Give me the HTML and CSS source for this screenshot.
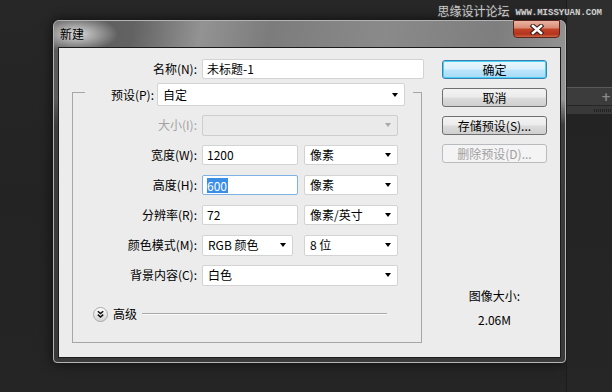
FILE: index.html
```html
<!DOCTYPE html>
<html lang="zh-CN">
<head>
    <meta charset="utf-8">
    <meta name="viewport" content="width=device-width,initial-scale=1.0">
    <link rel="stylesheet" href="styles.css">
</head>
<body>
<div class="screen">
    <div class="desk">
        <div class="dialog">
            <div class="titlebar">
                <span class="title">新建</span>
                <div class="close">
                    <svg width="14" height="11" viewBox="0 0 14 11">
                        <path d="M3 2 L11 9 M11 2 L3 9" stroke="#3a1a14" stroke-width="4.6" stroke-linecap="square"/>
                        <path d="M3 2 L11 9 M11 2 L3 9" stroke="#fff" stroke-width="2.6" stroke-linecap="square"/>
                    </svg>
                </div>
            </div>
            <div class="client">
                <div class="form">
                    <div class="name-row">
                        <label>名称(N):</label>
                        <div class="field name-field">未标题-1</div>
                    </div>
                    <fieldset class="group">
                        <legend>
                            <div class="preset">
                                <label>预设(P):</label>
                                <div class="field select preset-select">自定<i class="caret"></i></div>
                            </div>
                        </legend>
                        <div class="rows">
                            <div class="row disabled">
                                <label>大小(I):</label>
                                <div class="field select full"><i class="caret"></i></div>
                            </div>
                            <div class="row">
                                <label>宽度(W):</label>
                                <div class="field num">1200</div>
                                <div class="field select unit">像素<i class="caret"></i></div>
                            </div>
                            <div class="row">
                                <label>高度(H):</label>
                                <div class="field num focus"><span class="hl">600</span></div>
                                <div class="field select unit">像素<i class="caret"></i></div>
                            </div>
                            <div class="row">
                                <label>分辨率(R):</label>
                                <div class="field num">72</div>
                                <div class="field select unit">像素/英寸<i class="caret"></i></div>
                            </div>
                            <div class="row">
                                <label>颜色模式(M):</label>
                                <div class="field select mode">RGB 颜色<i class="caret"></i></div>
                                <div class="field select unit bits">8 位<i class="caret"></i></div>
                            </div>
                            <div class="row">
                                <label>背景内容(C):</label>
                                <div class="field select full">白色<i class="caret"></i></div>
                            </div>
                        </div>
                        <div class="advanced">
                            <svg class="adv-icon" width="15" height="15" viewBox="0 0 15 15">
                                <defs>
                                    <linearGradient id="ball" x1="0" y1="0" x2="0" y2="1">
                                        <stop offset="0" stop-color="#ffffff"/>
                                        <stop offset="1" stop-color="#d4d4d4"/>
                                    </linearGradient>
                                </defs>
                                <circle cx="7.5" cy="7.5" r="7" fill="url(#ball)" stroke="#a9a9a9"/>
                                <path d="M4.8 4.2 L7.5 6.6 L10.2 4.2 M4.8 7.6 L7.5 10 L10.2 7.6" fill="none" stroke="#111" stroke-width="1.5"/>
                            </svg>
                            <span>高级</span>
                            <div class="adv-line"></div>
                        </div>
                    </fieldset>
                </div>
                <div class="actions">
                    <div class="btn primary">确定</div>
                    <div class="btn">取消</div>
                    <div class="btn">存储预设(S)...</div>
                    <div class="btn off">删除预设(D)...</div>
                    <div class="size-label">图像大小:</div>
                    <div class="size-value">2.06M</div>
                </div>
            </div>
        </div>
    </div>
    <div class="panels">
        <div class="panel-top"></div>
        <div class="panel-tab"><span class="plus">+</span></div>
        <div class="panel-grip"><i></i></div>
        <div class="panel-body"></div>
    </div>
    <div class="watermark">思缘设计论坛<span>WWW.MISSYUAN.COM</span></div>
</div>
</body>
</html>
```

FILE: styles.css
```css
* {box-sizing: border-box;}
body {margin: 0; background: #242424; font: 12px/16px "Noto Sans CJK SC", "Microsoft YaHei", sans-serif; color: #000;}

.screen {position: relative; display: flex; width: 612px; height: 392px; overflow: hidden; background: linear-gradient(180deg, #272727 0%, #232323 50%, #252525 100%);}
.desk {width: 566px; flex: none; padding: 20px 0 0 53px;}

/* window frame */
.dialog {display: flex; flex-direction: column; width: 513px; height: 343px; padding: 0 4px 4px; border: 1px solid #b4b4b4; border-radius: 6px 6px 4px 4px;
    background:
        radial-gradient(ellipse 42px 18px at 22px 13px, rgba(235,235,235,.9), rgba(235,235,235,0)),
        linear-gradient(180deg, rgba(60,60,60,0) 0, rgba(60,60,60,0) 78px, #3d3d3d 104px, #3a3a3a 100%),
        linear-gradient(100deg, #5a5a5a 0%, #626262 14%, #939393 26%, #7c7c7c 38%, #8a8a8a 58%, #7e7e7e 78%, #a2a2a2 100%);
    box-shadow: 0 0 12px rgba(0,0,0,.7);}
.titlebar {display: flex; justify-content: space-between; align-items: flex-start; height: 26px; flex: none;}
.title {margin: 6px 0 0 2px; line-height: 14px; color: #000;}
.close {display: flex; align-items: center; justify-content: center; width: 47px; height: 18px; margin: -1px 1px 0 0; border: 1px solid #5e261b; border-radius: 0 0 4px 4px;
    background: linear-gradient(180deg, #eab3a3 0%, #d98d77 42%, #c2422a 52%, #b3331d 82%, #cf6547 100%);}

/* client area */
.client {display: flex; flex: 1; padding: 10px 0 0 13px; background: #ececec; border: 1px solid #1c1c1c;}
.form {width: 352px; flex: none;}
.name-row {display: flex; align-items: center; height: 21px;}
.name-row label {width: 130px; padding-right: 5px; text-align: right;}

.field {display: flex; align-items: center; height: 20px; padding-left: 4px; background: #fff; border: 1px solid #d3d3d3; border-radius: 2px; white-space: nowrap;}
.name-field {width: 222px;}
.select {padding-left: 5px;}
.caret {width: 0; height: 0; margin: 0 6px 0 auto; border-style: solid; border-width: 4px 3.5px 0; border-color: #000 transparent transparent;}

.group {width: 350px; margin: 0; padding: 0 0 18px; border: 1px solid #a6a6a6;}
.group legend {margin-left: 12px; padding: 4px 8px 0 20px;}
.preset {display: flex; align-items: center;}
.preset label {width: 52px; padding-right: 3px; text-align: right;}
.preset-select {width: 248px; height: 23px;}

.rows {padding-top: 4px;}
.row {display: flex; align-items: center; height: 30px;}
.row label {width: 129px; padding-right: 5px; text-align: right;}
.full {width: 196px; height: 21px;}
.num {width: 96px;}
.unit {width: 94px; margin-left: 6px;}
.mode {width: 91px; height: 21px;}
.bits {margin-left: 11px; height: 21px;}
.focus {border-color: #7fb1e4;}
.hl {background: #3a8ee6; color: #fff; padding-right: 1px; line-height: 15px;}
.disabled label {color: #a3a3a3;}
.disabled .field {background: #eaeaea; border-color: #cdcdcd;}
.disabled .caret {border-top-color: #a8a8a8;}

.advanced {display: flex; align-items: center; height: 20px; margin-top: 14px; padding-left: 20px;}
.advanced span {margin-left: 5px;}
.adv-line {width: 245px; height: 2px; margin-left: 5px; border-top: 1px solid #a9a9a9; border-bottom: 1px solid #fafafa;}

/* buttons */
.actions {display: flex; flex-direction: column; width: 105px; margin: 2px 0 0 18px; text-align: center;}
.btn {height: 19px; margin-bottom: 9px; line-height: 17px; border: 1px solid #707070; border-radius: 3px;
    background: linear-gradient(180deg, #f3f3f3 0%, #ebebeb 48%, #dcdcdc 52%, #cfcfcf 100%);}
.btn.primary {border-color: #3c7fb1; background: linear-gradient(180deg, #eaf6fd 0%, #d9f0fc 48%, #bee6fd 52%, #a7d9f5 100%); box-shadow: inset 0 0 0 1px #48d1f7;}
.btn.off {border-color: #b8bcbf; background: #f4f4f4; color: #a0a0a0;}
.size-label {margin-top: 116px; line-height: 16px;}
.size-value {margin-top: 8px; line-height: 16px;}

/* workspace panels behind the dialog */
.panels {display: flex; flex-direction: column; flex: 1; border-left: 1px solid #1b1b1b;}
.panel-top {height: 87px; background: #2e2e2e;}
.panel-tab {display: flex; justify-content: flex-end; align-items: center; height: 18px; background: #3c3c3c; border-top: 1px solid #5a5a5a;}
.plus {margin-right: 1px; color: #8a8a8a; font: bold 12px/12px "DejaVu Sans", sans-serif;}
.panel-grip {display: flex; justify-content: flex-end; align-items: center; height: 9px; background: #393939; border-top: 1px solid #262626;}
.panel-grip i {width: 18px; height: 3px; background: repeating-linear-gradient(90deg, #222 0 1px, transparent 1px 2px);}
.panel-body {flex: 1; background: linear-gradient(180deg, #232323, #262626);}

.watermark {position: absolute; top: 2px; right: 10px; display: flex; align-items: center; color: #c9c9c9; font-size: 12px; line-height: 18px;
    text-shadow: -1px 0 #333, 1px 0 #333, 0 -1px #333, 0 1px #333;}
.watermark span {margin: 4px 0 0 6px; font: bold 9px/9px "Liberation Mono", monospace; color: #cfcfcf;}
```
